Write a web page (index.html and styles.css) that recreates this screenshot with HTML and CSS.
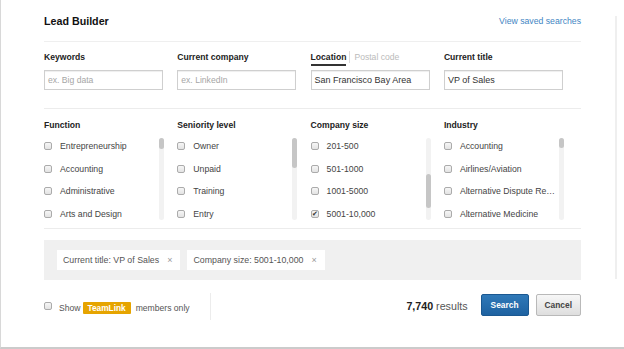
FILE: index.html
```html
<!DOCTYPE html>
<html>
<head>
<meta charset="utf-8">
<title>Lead Builder</title>
<link rel="stylesheet" href="styles.css">
</head>
<body>

<div class="modal">
  <div class="dialog">

    <div class="head">
      <h1>Lead Builder</h1>
      <a class="saved" href="#">View saved searches</a>
    </div>

    <div class="fields">
      <div class="field">
        <div class="label">Keywords</div>
        <div class="input empty">ex. Big data</div>
      </div>
      <div class="field">
        <div class="label">Current company</div>
        <div class="input empty">ex. LinkedIn</div>
      </div>
      <div class="field">
        <div class="label tabs"><span class="tab on">Location</span><span class="tab">Postal code</span></div>
        <div class="input">San Francisco Bay Area</div>
      </div>
      <div class="field">
        <div class="label">Current title</div>
        <div class="input">VP of Sales</div>
      </div>
    </div>

    <div class="facets">
      <div class="facet">
        <h2>Function</h2>
        <div class="list">
          <ul>
            <li><span class="box"></span>Entrepreneurship</li>
            <li><span class="box"></span>Accounting</li>
            <li><span class="box"></span>Administrative</li>
            <li><span class="box"></span>Arts and Design</li>
          </ul>
          <div class="track"><div class="thumb t-function"></div></div>
        </div>
      </div>
      <div class="facet">
        <h2>Seniority level</h2>
        <div class="list">
          <ul>
            <li><span class="box"></span>Owner</li>
            <li><span class="box"></span>Unpaid</li>
            <li><span class="box"></span>Training</li>
            <li><span class="box"></span>Entry</li>
          </ul>
          <div class="track"><div class="thumb t-seniority"></div></div>
        </div>
      </div>
      <div class="facet">
        <h2>Company size</h2>
        <div class="list">
          <ul>
            <li><span class="box"></span>201-500</li>
            <li><span class="box"></span>501-1000</li>
            <li><span class="box"></span>1001-5000</li>
            <li><span class="box checked">&#10004;</span>5001-10,000</li>
          </ul>
          <div class="track"><div class="thumb t-size"></div></div>
        </div>
      </div>
      <div class="facet">
        <h2>Industry</h2>
        <div class="list">
          <ul>
            <li><span class="box"></span>Accounting</li>
            <li><span class="box"></span>Airlines/Aviation</li>
            <li><span class="box"></span><span class="cut">Alternative Dispute Re&hellip;</span></li>
            <li><span class="box"></span>Alternative Medicine</li>
          </ul>
          <div class="track"><div class="thumb t-industry"></div></div>
        </div>
      </div>
    </div>

    <div class="chips">
      <span class="chip">Current title: VP of Sales<span class="x">&times;</span></span>
      <span class="chip">Company size: 5001-10,000<span class="x">&times;</span></span>
    </div>

    <div class="foot">
      <div class="teamlink">
        <span class="box"></span>
        <span>Show</span>
        <span class="badge">TeamLink</span>
        <span>members only</span>
      </div>
      <div class="results"><b>7,740</b> results</div>
      <a class="btn primary" href="#">Search</a>
      <a class="btn" href="#">Cancel</a>
    </div>

  </div>
  <div class="rail"></div>
</div>

</body>
</html>
```

FILE: styles.css
```css
  body         { margin: 0; font-family: "Liberation Sans", Arial, sans-serif; font-size: 8.7px; color: #444; background: #fff; }
  a            { text-decoration: none; }

  .modal       { width: 624px; height: 349px; box-sizing: border-box; border-left: 1px solid #d8d8d8; border-bottom: 2px solid #cbcbcb; display: flex; overflow: hidden; }
  .dialog      { width: 537px; margin-left: 43px; }
  .rail        { width: 2px; height: 263px; margin: 16px 0 0 34px; background: #efefef; }

  /* header */
  .head        { height: 42px; box-sizing: border-box; padding-top: 1px; border-bottom: 1px solid #efefef; display: flex; align-items: center; justify-content: space-between; }
  h1           { font: bold 10.7px "Liberation Sans", Arial, sans-serif; color: #111; margin: 0; }
  .saved       { color: #3f86c3; font-size: 8.7px; }

  /* text fields */
  .fields      { display: flex; gap: 14.3px; padding: 9px 0 18px; border-bottom: 1px solid #ececec; }
  .field       { width: 119px; }
  .label       { font-weight: bold; font-size: 8.6px; color: #222; line-height: 12px; height: 12px; margin-bottom: 7px; }
  .tabs        { display: flex; align-items: flex-start; }
  .tab         { color: #bbb; font-weight: normal; padding-left: 4px; border-left: 1px solid #ddd; margin-left: 3px; }
  .tab.on      { color: #222; font-weight: bold; padding: 0 0 1px; margin: 0; border: 0; border-bottom: 2px solid #333; }
  .input       { height: 20px; box-sizing: border-box; border: 1px solid #cfcfcf; box-shadow: inset 0 1px 1px rgba(0,0,0,0.07); padding: 0 3px; line-height: 18px; font-size: 9px; color: #333; }
  .input.empty { color: #a6a6a6; font-size: 8.6px; }

  /* facet lists */
  .facets      { display: flex; gap: 13.3px; padding: 10px 0 5px; border-bottom: 1px solid #ececec; }
  .facet       { width: 120px; }
  h2           { font: bold 8.6px "Liberation Sans", Arial, sans-serif; color: #222; line-height: 12px; margin: 0 0 4px; }
  .list        { height: 88px; display: flex; overflow: hidden; }
  .list ul     { flex: 1; list-style: none; margin: 0; padding: 0; min-width: 0; }
  .list li     { height: 22.5px; display: flex; align-items: center; white-space: nowrap; color: #444; }
  .list .box   { margin-right: 8px; }
  .cut         { white-space: nowrap; }
  .track       { width: 5px; height: 82px; margin-top: 3px; border-radius: 3px; background: #f2f2f2; position: relative; }
  .thumb       { position: absolute; left: 0; width: 5px; border-radius: 3px; background: #c6c6c6; }
  .t-function  { top: 0; height: 11px; }
  .t-seniority { top: 0; height: 30px; }
  .t-size      { top: 36px; height: 34px; }
  .t-industry  { top: 0; height: 10px; }

  .box         { display: inline-block; flex: none; width: 8px; height: 8px; box-sizing: border-box; border: 1px solid #ababab; border-radius: 2px; background: linear-gradient(#f6f6f6, #e3e3e3); font-size: 7px; line-height: 6px; text-align: center; color: #333; }

  /* selected filters */
  .chips       { margin-top: 11px; height: 40px; box-sizing: border-box; background: #f0f0f0; padding: 10px 13px; display: flex; gap: 7px; }
  .chip        { height: 20px; background: #fff; padding: 0 8px 0 6px; display: flex; align-items: center; color: #555; font-size: 8.8px; }
  .chip .x     { color: #999; margin-left: 8px; font-size: 9px; }

  /* footer */
  .foot        { display: flex; align-items: center; padding-top: 13px; }
  .teamlink    { width: 167px; height: 27px; border-right: 1px solid #ececec; display: flex; align-items: center; color: #555; font-size: 8.6px; padding-top: 2px; box-sizing: border-box; }
  .teamlink .box { margin-right: 7px; margin-top: -3px; }
  .badge       { background: #e6a400; color: #fff; font-weight: bold; font-size: 8.3px; height: 12px; line-height: 12px; padding: 0 5px; margin: 0 5px 0 2px; border-radius: 1px; }
  .results     { margin-left: auto; margin-right: 13px; font-size: 10.7px; color: #555; margin-top: -2px; }
  .results b   { color: #222; }
  .btn         { height: 22px; box-sizing: border-box; line-height: 20px; padding: 0 8px; border: 1px solid #b9b9b9; border-radius: 2px; background: linear-gradient(#f7f7f7, #dedede); color: #444; font-weight: bold; font-size: 8.4px; margin-top: -4px; }
  .btn.primary { background: linear-gradient(#3079b8, #1e62a1); border-color: #1b5891; color: #fff; margin-right: 7px; padding: 0 9px; }
```
